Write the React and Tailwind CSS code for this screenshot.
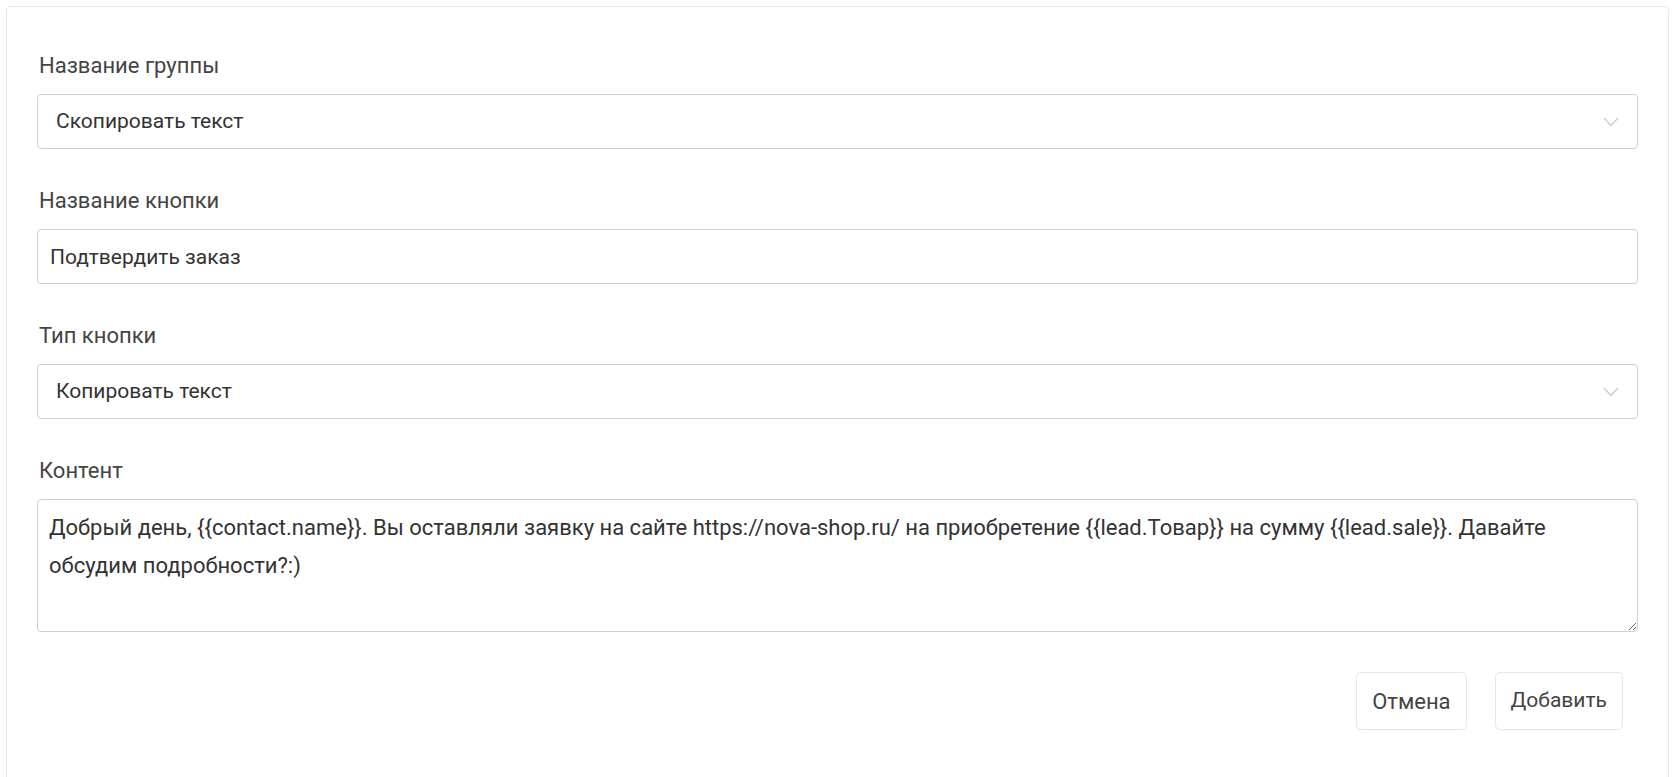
import React from "react";

const font = { fontFamily: "Roboto, 'Noto Sans', sans-serif" };

function Chevron() {
  return (
    <svg width="16" height="10" viewBox="0 0 16 10" fill="none" className="shrink-0">
      <path d="M1 1l7 7.5L15 1" stroke="#c9c9c9" strokeWidth="1.2" />
    </svg>
  );
}

function Label({ children }) {
  return <div className="h-[28px] leading-[28px] text-[22px] text-[#444] pl-[2px] mb-[14px]">{children}</div>;
}

function SelectBox({ value }) {
  return (
    <div className="h-[55px] flex items-center justify-between border border-[#cfcfcf] rounded-[4px] bg-white pl-[18px] pr-[18px]">
      <span className="text-[21px] text-[#333]">{value}</span>
      <Chevron />
    </div>
  );
}

export default function App() {
  return (
    <div className="w-[1680px] h-[777px] bg-white pt-[6px] pl-[6px] pr-[11px] overflow-hidden" style={font}>
      <div className="border border-[#e8e8e8] rounded-[5px] h-[800px] pt-[45px] px-[30px]">
        <Label>Название группы</Label>
        <SelectBox value="Скопировать текст" />

        <div className="mt-[38px]">
          <Label>Название кнопки</Label>
          <input
            defaultValue="Подтвердить заказ"
            className="w-full h-[55px] border border-[#cfcfcf] rounded-[4px] px-[12px] text-[21px] text-[#333] outline-none"
          />
        </div>

        <div className="mt-[38px]">
          <Label>Тип кнопки</Label>
          <SelectBox value="Копировать текст" />
        </div>

        <div className="mt-[38px]">
          <Label>Контент</Label>
          <textarea
            defaultValue="Добрый день, {{contact.name}}. Вы оставляли заявку на сайте https://nova-shop.ru/ на приобретение {{lead.Товар}} на сумму {{lead.sale}}. Давайте обсудим подробности?:)"
            className="block w-full h-[133px] border border-[#cfcfcf] rounded-[4px] px-[11px] pt-[9px] text-[22px] leading-[38px] text-[#333] outline-none resize"
          />
        </div>

        <div className="flex justify-end gap-[28px] mt-[40px] pr-[15px]">
          <button className="h-[58px] px-[15px] border border-[#e6e6e6] rounded-[5px] text-[22px] text-[#444] bg-white">
            Отмена
          </button>
          <button className="h-[58px] px-[15px] border border-[#e6e6e6] rounded-[5px] text-[21px] text-[#444] bg-white">
            Добавить
          </button>
        </div>
      </div>
    </div>
  );
}
